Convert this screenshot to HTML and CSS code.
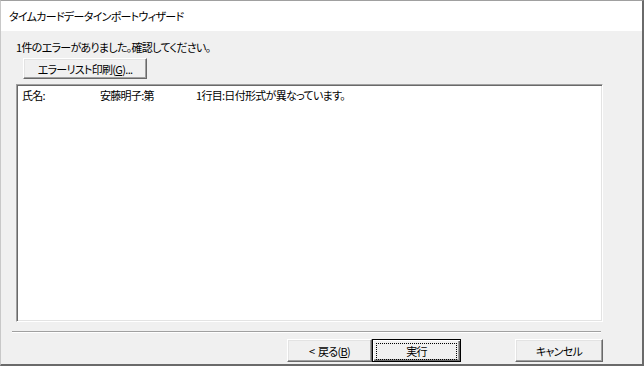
FILE: index.html
```html
<!DOCTYPE html>
<html lang="ja">
<head>
    <meta charset="UTF-8">
    <meta name="viewport" content="width=device-width, initial-scale=1.0">
    <title>タイムカードデータインポートウィザード</title>
    <link rel="stylesheet" href="styles.css">
</head>
<body>
    <div class="wizard">
        <!-- Title band -->
        <div class="header">
            <span class="title">タイムカードデータインポートウィザード</span>
        </div>

        <!-- Error list -->
        <div class="content">
            <p class="message">1件のエラーがありました。確認してください。</p>
            <button class="btn btn-print">エラーリスト印刷(<u>G</u>)...</button>
            <div class="listbox">
                <div class="list-row">
                    <span class="col-label">氏名:</span><span class="col-person">安藤明子:第</span><span>1行目:日付形式が異なっています。</span>
                </div>
            </div>
        </div>

        <div class="separator"></div>

        <!-- Navigation -->
        <div class="footer">
            <button class="btn btn-back">&lt;&nbsp;&nbsp;戻る(<u>B</u>)</button>
            <button class="btn btn-default"><span class="focus">実行</span></button>
            <button class="btn btn-cancel">キャンセル</button>
        </div>
    </div>
</body>
</html>
```

FILE: styles.css
```css
body {
    margin: 0;
    padding: 0;
    background-color: #f0f0f0;
    font-family: "Noto Sans CJK JP", "Noto Sans", sans-serif;
    font-size: 11px;
    color: #000;
}
.wizard {
    width: 644px;
    height: 366px;
    box-sizing: border-box;
    border-top: 1px solid #a0a0a0;
    border-left: 1px solid #c8c8c8;
    border-right: 2px solid #6a6a6a;
    border-bottom: 2px solid #6a6a6a;
    background-color: #f0f0f0;
    overflow: hidden;
    font-feature-settings: "palt";
    letter-spacing: -0.7px;
}
.header {
    height: 30px;
    background-color: #fff;
    padding: 7px 0 0 8px;
    box-sizing: border-box;
    line-height: 16px;
}
.content {
    padding: 8px 0 0 15px;
    display: flex;
    flex-direction: column;
    align-items: flex-start;
}
.message {
    margin: 0;
    line-height: 16px;
}
.btn {
    font-family: inherit;
    font-size: 11px;
    font-feature-settings: "palt";
    letter-spacing: -0.7px;
    color: #000;
    background-color: #f0f0f0;
    height: 23px;
    padding: 0;
    box-sizing: border-box;
    border: 1px solid;
    border-color: #fff #696969 #696969 #fff;
    box-shadow: inset -1px -1px 0 #a0a0a0, inset 1px 1px 0 #e3e3e3;
    line-height: 16px;
}
.btn u {
    text-decoration-thickness: 1px;
    text-underline-offset: 1px;
}
.btn-print {
    margin: 3px 0 0 7px;
    width: 124px;
    height: 21px;
}
.listbox {
    margin-top: 5px;
    width: 587px;
    height: 238px;
    box-sizing: border-box;
    background-color: #fff;
    border: 1px solid;
    border-color: #a0a0a0 #fff #fff #a0a0a0;
    box-shadow: inset 1px 1px 0 #696969, inset -1px -1px 0 #e3e3e3;
    padding: 2px 5px;
    line-height: 16px;
}
.list-row {
    white-space: nowrap;
}
.col-label {
    display: inline-block;
    width: 78px;
}
.col-person {
    display: inline-block;
    width: 96px;
}
.separator {
    margin: 9px 0 0 11px;
    width: 589px;
    height: 1px;
    background-color: #a0a0a0;
    border-bottom: 1px solid #fff;
}
.footer {
    margin-top: 6px;
    display: flex;
    justify-content: flex-end;
    padding-right: 39px;
}
.btn-back {
    width: 85px;
}
.btn-default {
    width: 89px;
    border: 1px solid #000;
    box-shadow: inset 1px 1px 0 #fff, inset -1px -1px 0 #696969, inset -2px -2px 0 #a0a0a0;
    padding: 3px;
}
.btn-default .focus {
    display: block;
    height: 15px;
    line-height: 14px;
    border: 1px dotted #000;
}
.btn-cancel {
    width: 88px;
    margin-left: 54px;
}
```
